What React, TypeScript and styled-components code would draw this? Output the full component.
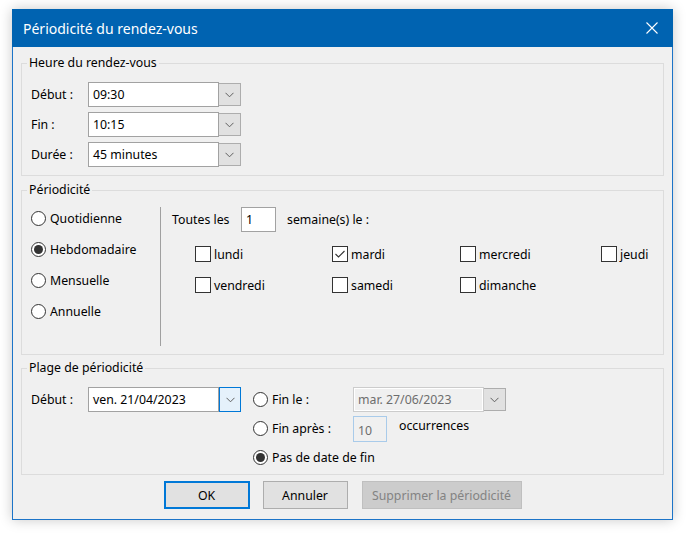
import styled, { createGlobalStyle, css } from "styled-components";

const GlobalStyle = createGlobalStyle`
  body {
    margin: 0;
    background: #ffffff;
    font-family: "Noto Sans", "Liberation Sans", sans-serif;
    font-size: 12.3px;
    color: #000;
  }
`;

const Page = styled.div`
  padding: 9px 13px 13px 12px;
`;

const Window = styled.div`
  width: 661px;
  box-sizing: border-box;
  border: 1px solid #1c74c8;
  border-top: none;
  background: #f0f0f0;
  box-shadow: 0 0 12px rgba(0, 0, 0, 0.22);
`;

const TitleBar = styled.div`
  height: 38px;
  margin: 0 -1px;
  background: #0063b1;
  display: flex;
  align-items: center;
  justify-content: space-between;
  padding: 0 15px 0 11px;
  color: #fff;
  font-size: 14px;
`;

const Body = styled.div`
  padding: 9px 8px 10px 8px;
`;

const Group = styled.fieldset<{ $gap?: number }>`
  margin: ${(p) => p.$gap ?? 0}px 0 0 0;
  padding: 0;
  border: 1px solid #dcdcdc;
  min-width: 0;
`;

const Legend = styled.legend`
  margin-left: 5px;
  padding: 0 2px;
  line-height: 14px;
  height: 14px;
`;

const Stack = styled.div`
  display: flex;
  flex-direction: column;
  gap: 5px;
  padding: 12px 0 8px 9px;
`;

const Row = styled.div`
  display: flex;
  align-items: center;
  height: 25px;
`;

const FieldLabel = styled.span`
  width: 57px;
`;

const Combo = styled.div`
  display: flex;
  align-items: center;
  height: 25px;
`;

const TextBox = styled.div<{ $width: number; $disabled?: boolean; $soft?: boolean }>`
  width: ${(p) => p.$width}px;
  height: 25px;
  box-sizing: border-box;
  border: 1px solid #a2a2a2;
  background: #fff;
  padding-left: 4px;
  display: flex;
  align-items: center;
  ${(p) =>
    p.$disabled &&
    css`
      background: #f0f0f0;
      border-color: #cccccc;
      color: #6d6d6d;
      box-shadow: inset 0 0 0 1px #ffffff;
    `}
  ${(p) =>
    p.$soft &&
    css`
      height: 26px;
      background: #f0f0f0;
      border-color: #a9cbea;
      color: #6d6d6d;
      padding-top: 3px;
    `}
`;

const DropButton = styled.div<{ $focused?: boolean }>`
  width: 22px;
  height: 23px;
  box-sizing: border-box;
  border: 1px solid #adadad;
  border-left: none;
  background: #e1e1e1;
  display: flex;
  align-items: center;
  justify-content: center;
  ${(p) =>
    p.$focused &&
    css`
      height: 25px;
      border: 1px solid #0078d7;
      background: #e5f1fb;
    `}
`;

const ChevronDown = () => (
  <svg width="9" height="6" viewBox="0 0 9 6">
    <path d="M0.5 0.8 L4.5 4.8 L8.5 0.8" fill="none" stroke="#5f5f5f" strokeWidth="1" />
  </svg>
);

const CloseIcon = () => (
  <svg width="12" height="12" viewBox="0 0 12 12">
    <path d="M0.5 0.5 L11.5 11.5 M11.5 0.5 L0.5 11.5" stroke="#fff" strokeWidth="1.1" />
  </svg>
);

const Periodicity = styled.div`
  display: flex;
  padding: 0 0 8px 9px;
`;

const RadioColumn = styled.div`
  width: 130px;
  box-sizing: border-box;
  height: 139px;
  margin-top: 10px;
  border-right: 1px solid #a0a0a0;
  display: flex;
  flex-direction: column;
  gap: 8px;
`;

const RadioRow = styled.label<{ $width?: number }>`
  display: flex;
  align-items: center;
  height: 23px;
  gap: 4px;
  ${(p) => p.$width && `width: ${p.$width}px;`}
`;

const RadioCircle = styled.span<{ $checked?: boolean }>`
  width: 15px;
  height: 15px;
  box-sizing: border-box;
  border: 1px solid #333;
  border-radius: 50%;
  background: #fff;
  display: flex;
  align-items: center;
  justify-content: center;
  &::after {
    content: "";
    width: 9px;
    height: 9px;
    border-radius: 50%;
    background: ${(p) => (p.$checked ? "#333" : "transparent")};
  }
`;

const WeekPanel = styled.div`
  padding-left: 11px;
  padding-top: 10px;
  flex: 1;
`;

const EveryRow = styled.div`
  display: flex;
  align-items: center;
  height: 25px;
`;

const EveryLabel = styled.span`
  width: 69px;
`;

const WeekCount = styled.div`
  width: 35px;
  height: 25px;
  box-sizing: border-box;
  border: 1px solid #a2a2a2;
  background: #fff;
  padding-left: 4px;
  display: flex;
  align-items: center;
  margin-right: 11px;
`;

const DayGrid = styled.div`
  display: grid;
  grid-template-columns: 137px 128px 141px auto;
  grid-auto-rows: 22px;
  row-gap: 9px;
  margin: 11px 0 0 23px;
`;

const DayItem = styled.label`
  display: flex;
  align-items: center;
  gap: 3px;
`;

const CheckBox = styled.span`
  width: 16px;
  height: 16px;
  box-sizing: border-box;
  border: 1px solid #333;
  background: #fff;
  display: flex;
  align-items: center;
  justify-content: center;
`;

const CheckMark = () => (
  <svg width="12" height="10" viewBox="0 0 12 10">
    <path d="M1.5 5 L4.5 8 L10.5 2" fill="none" stroke="#333" strokeWidth="1.1" />
  </svg>
);

const RangeRow = styled.div`
  display: flex;
  align-items: flex-start;
  padding: 12px 0 4px 9px;
`;

const EndColumn = styled.div`
  margin-left: 12px;
  display: flex;
  flex-direction: column;
  gap: 4px;
`;

const EndRow = styled.div`
  display: flex;
  align-items: center;
  height: 25px;
`;

const Occurrences = styled.span`
  margin-left: 12px;
  align-self: flex-start;
  line-height: 20px;
`;

const ButtonBar = styled.div`
  display: flex;
  justify-content: center;
  margin-top: 6px;
`;

const Button = styled.div<{ $width: number; $variant?: "default" | "disabled" }>`
  width: ${(p) => p.$width}px;
  height: 28px;
  box-sizing: border-box;
  border: 1px solid #adadad;
  background: #e1e1e1;
  display: flex;
  align-items: center;
  justify-content: center;
  & + & {
    margin-left: 13px;
  }
  ${(p) =>
    p.$variant === "default" &&
    css`
      border: 2px solid #0078d7;
    `}
  ${(p) =>
    p.$variant === "disabled" &&
    css`
      background: #cccccc;
      border-color: #bfbfbf;
      color: #838383;
      margin-left: 14px !important;
    `}
`;

const times = [
  { label: "Début :", value: "09:30" },
  { label: "Fin :", value: "10:15" },
  { label: "Durée :", value: "45 minutes" },
];

const patterns = [
  { label: "Quotidienne", checked: false },
  { label: "Hebdomadaire", checked: true },
  { label: "Mensuelle", checked: false },
  { label: "Annuelle", checked: false },
];

const days = [
  { label: "lundi", checked: false },
  { label: "mardi", checked: true },
  { label: "mercredi", checked: false },
  { label: "jeudi", checked: false },
  { label: "vendredi", checked: false },
  { label: "samedi", checked: false },
  { label: "dimanche", checked: false },
];

export default function App() {
  return (
    <Page>
      <GlobalStyle />
      <Window>
        <TitleBar>
          <span>Périodicité du rendez-vous</span>
          <CloseIcon />
        </TitleBar>
        <Body>
          <Group>
            <Legend>Heure du rendez-vous</Legend>
            <Stack>
              {times.map((t) => (
                <Row key={t.label}>
                  <FieldLabel>{t.label}</FieldLabel>
                  <Combo>
                    <TextBox $width={131}>{t.value}</TextBox>
                    <DropButton>
                      <ChevronDown />
                    </DropButton>
                  </Combo>
                </Row>
              ))}
            </Stack>
          </Group>

          <Group $gap={7}>
            <Legend>Périodicité</Legend>
            <Periodicity>
              <RadioColumn>
                {patterns.map((p) => (
                  <RadioRow key={p.label}>
                    <RadioCircle $checked={p.checked} />
                    {p.label}
                  </RadioRow>
                ))}
              </RadioColumn>
              <WeekPanel>
                <EveryRow>
                  <EveryLabel>Toutes les</EveryLabel>
                  <WeekCount>1</WeekCount>
                  <span>semaine(s) le :</span>
                </EveryRow>
                <DayGrid>
                  {days.map((d) => (
                    <DayItem key={d.label}>
                      <CheckBox>{d.checked && <CheckMark />}</CheckBox>
                      {d.label}
                    </DayItem>
                  ))}
                </DayGrid>
              </WeekPanel>
            </Periodicity>
          </Group>

          <Group $gap={6}>
            <Legend>Plage de périodicité</Legend>
            <RangeRow>
              <Row>
                <FieldLabel>Début :</FieldLabel>
                <Combo>
                  <TextBox $width={131}>ven. 21/04/2023</TextBox>
                  <DropButton $focused>
                    <ChevronDown />
                  </DropButton>
                </Combo>
              </Row>
              <EndColumn>
                <EndRow>
                  <RadioRow $width={100}>
                    <RadioCircle />
                    Fin le :
                  </RadioRow>
                  <Combo>
                    <TextBox $width={131} $disabled>
                      mar. 27/06/2023
                    </TextBox>
                    <DropButton>
                      <ChevronDown />
                    </DropButton>
                  </Combo>
                </EndRow>
                <EndRow>
                  <RadioRow $width={100}>
                    <RadioCircle />
                    Fin après :
                  </RadioRow>
                  <TextBox $width={34} $soft>
                    10
                  </TextBox>
                  <Occurrences>occurrences</Occurrences>
                </EndRow>
                <EndRow>
                  <RadioRow>
                    <RadioCircle $checked />
                    Pas de date de fin
                  </RadioRow>
                </EndRow>
              </EndColumn>
            </RangeRow>
          </Group>

          <ButtonBar>
            <Button $width={86} $variant="default">
              OK
            </Button>
            <Button $width={85}>Annuler</Button>
            <Button $width={160} $variant="disabled">
              Supprimer la périodicité
            </Button>
          </ButtonBar>
        </Body>
      </Window>
    </Page>
  );
}
